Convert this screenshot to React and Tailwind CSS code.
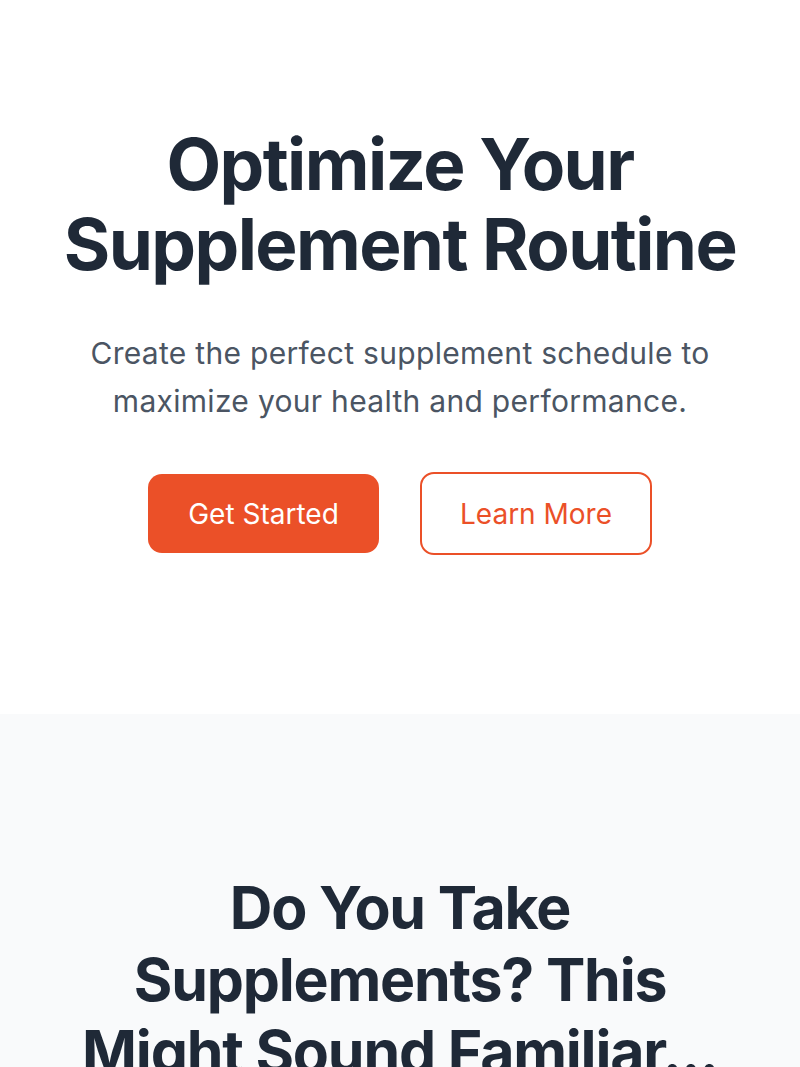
export default function App() {
  return (
    <div className="min-h-screen bg-white font-['Inter','Liberation_Sans',sans-serif] antialiased">
      {/* Hero */}
      <section className="bg-white px-12 pt-[124px] pb-[159px] text-center">
        <h1 className="text-[71px] leading-[80px] font-bold tracking-[-1.6px] text-[#1f2937]">
          Optimize Your Supplement Routine
        </h1>
        <p className="mx-auto mt-[45px] max-w-[690px] text-[30px] leading-[48px] tracking-[0.3px] text-[#4b5563]">
          Create the perfect supplement schedule to maximize your health and performance.
        </p>
        <div className="mt-[47px] flex items-center justify-center gap-[41px]">
          <button className="h-[79px] w-[231px] rounded-[14px] bg-[#eb5028] text-[28px] font-normal text-white">
            Get Started
          </button>
          <button className="h-[83px] w-[232px] rounded-[14px] border-2 border-[#eb5028] bg-white text-[28px] font-normal text-[#eb5028]">
            Learn More
          </button>
        </div>
      </section>

      {/* Problem section */}
      <section className="bg-[#f9fafb] px-16 pt-[158px] pb-32 text-center">
        <h2 className="text-[59px] leading-[72px] font-bold tracking-[-1.2px] text-[#1f2937]">
          Do You Take Supplements? This Might Sound Familiar...
        </h2>
      </section>
    </div>
  );
}
